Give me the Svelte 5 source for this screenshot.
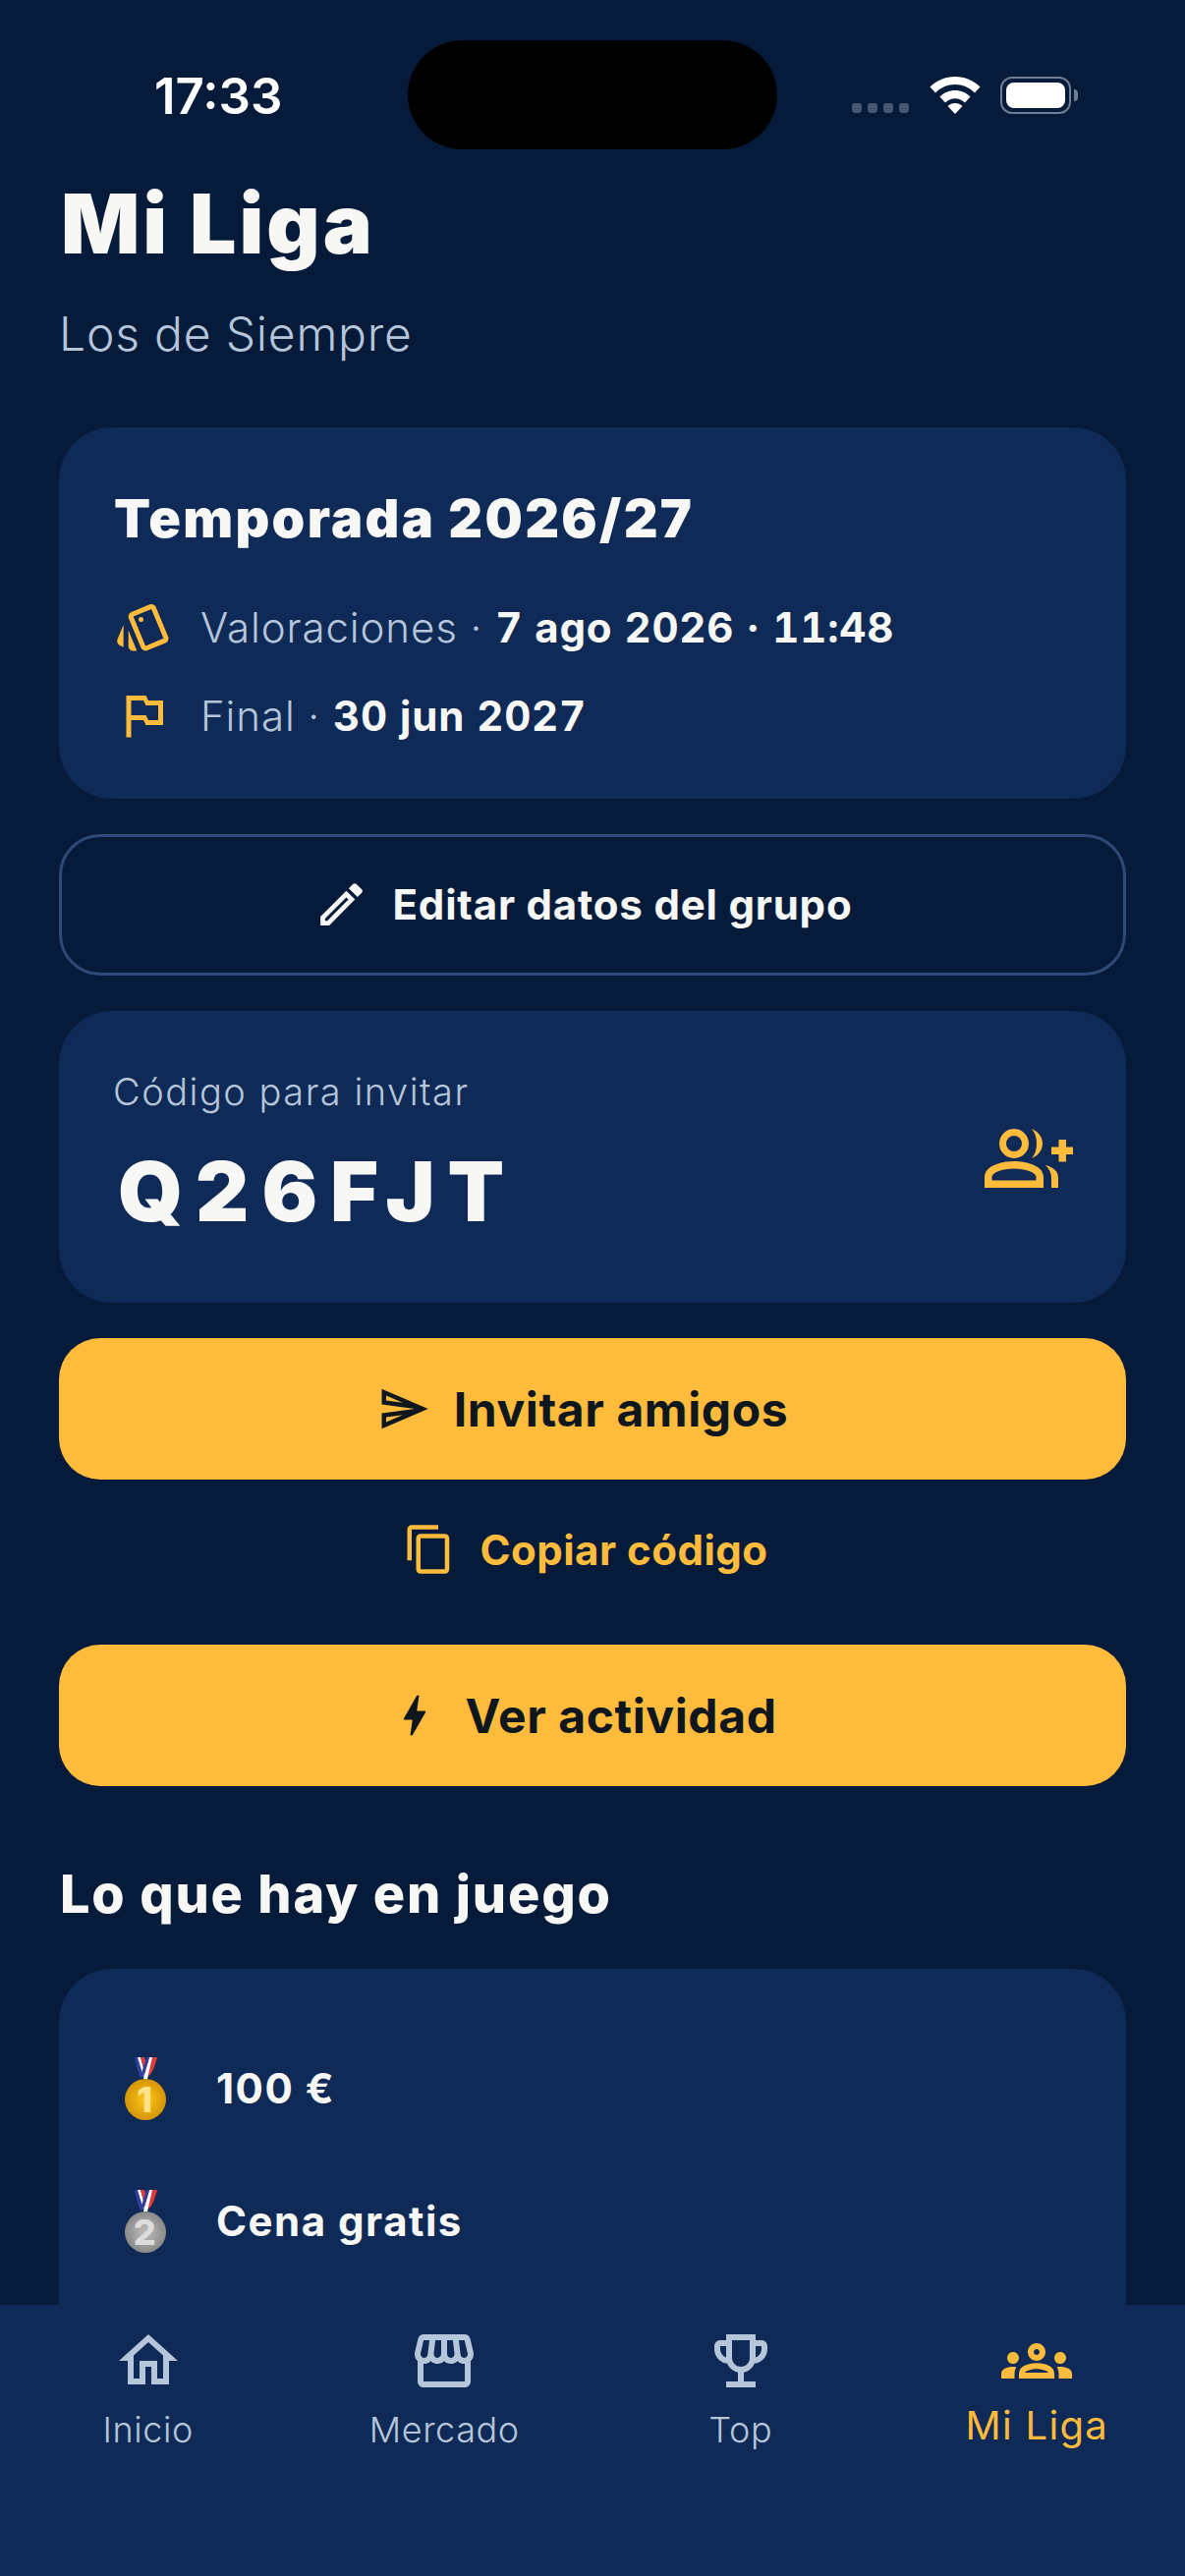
<script>
  const tabs = [
    { label: 'Inicio', d: 'M12 5.69l5 4.5V18h-2v-6H9v6H7v-7.81l5-4.5M12 3L2 12h3v8h6v-6h2v6h6v-8h3L12 3z' },
    { label: 'Mercado', d: 'M21.9 8.89l-1.05-4.37c-.22-.9-1-1.52-1.91-1.52H5.05c-.9 0-1.69.63-1.9 1.52L2.1 8.89c-.24 1.02-.02 2.06.62 2.88.08.11.19.19.28.29V19c0 1.1.9 2 2 2h14c1.1 0 2-.9 2-2v-6.94c.09-.09.2-.18.28-.28.64-.82.87-1.87.62-2.89zm-2.99-3.9l1.05 4.37c.1.42.01.84-.25 1.17-.14.18-.44.47-.94.47-.61 0-1.14-.49-1.21-1.14L16.98 5l1.93-.01zM13 5h1.96l.54 4.52c.05.39-.07.78-.33 1.07-.22.26-.54.41-.95.41-.67 0-1.22-.59-1.22-1.31V5zM8.49 9.52L9.04 5H11v4.69c0 .72-.55 1.31-1.29 1.31-.34 0-.65-.15-.89-.41-.25-.29-.37-.68-.33-1.07zm-4.45-.16L5.05 5h1.97l-.58 4.86c-.08.65-.6 1.14-1.21 1.14-.49 0-.8-.29-.93-.47-.27-.32-.36-.75-.26-1.17zM5 19v-6.03c.08.01.15.03.23.03.87 0 1.66-.36 2.24-.95.6.6 1.4.95 2.31.95.87 0 1.65-.36 2.23-.93.59.57 1.39.93 2.29.93.84 0 1.64-.35 2.24-.95.58.59 1.37.95 2.24.95.08 0 .15-.02.23-.03V19H5z' },
    { label: 'Top', d: 'M19 5h-2V3H7v2H5c-1.1 0-2 .9-2 2v1c0 2.55 1.92 4.63 4.39 4.94.63 1.5 1.98 2.63 3.61 2.96V19H7v2h10v-2h-4v-3.1c1.63-.33 2.98-1.46 3.61-2.96C19.08 12.63 21 10.55 21 8V7c0-1.1-.9-2-2-2zM5 8V7h2v3.82C5.84 10.4 5 9.3 5 8zm7 6c-1.65 0-3-1.35-3-3V5h6v6c0 1.65-1.35 3-3 3zm7-6c0 1.3-.84 2.4-2 2.82V7h2v1z' },
    { label: 'Mi Liga', active: true, d: 'M4 13c1.1 0 2-.9 2-2 0-1.1-.9-2-2-2s-2 .9-2 2c0 1.1.9 2 2 2zm1.13 1.1C4.76 14.04 4.39 14 4 14c-.99 0-1.93.21-2.78.58C.48 14.9 0 15.62 0 16.43V18h4.5v-1.61c0-.83.23-1.61.63-2.29zM20 13c1.1 0 2-.9 2-2 0-1.1-.9-2-2-2s-2 .9-2 2c0 1.1.9 2 2 2zm4 3.43c0-.81-.48-1.53-1.22-1.85C21.93 14.21 20.99 14 20 14c-.39 0-.76.04-1.13.1.4.68.63 1.46.63 2.29V18H24v-1.57zM16.24 13.65c-1.17-.52-2.61-.9-4.24-.9-1.63 0-3.07.39-4.24.9C6.68 14.13 6 15.21 6 16.39V18h12v-1.61c0-1.18-.68-2.26-1.76-2.74zM8.07 16c.09-.23.13-.39.91-.69.97-.38 1.99-.56 3.02-.56s2.05.18 3.02.56c.77.3.81.46.91.69H8.07zM12 8c.55 0 1 .45 1 1s-.45 1-1 1-1-.45-1-1 .45-1 1-1m0-2c-1.66 0-3 1.34-3 3s1.34 3 3 3 3-1.34 3-3-1.34-3-3-3z' }
  ];

  const prizes = [
    { n: '1', text: '100 €', from: '#fdc81a', to: '#d08f04', num: '#ffe38a' },
    { n: '2', text: 'Cena gratis', from: '#bdbdbd', to: '#858585', num: '#dcdcdc' }
  ];
</script>

<div class="page">
  <div class="island"></div>

  <div class="status">
    <span class="time">17:33</span>
    <div class="status-icons">
      <div class="dots"><i></i><i></i><i></i><i></i></div>
      <svg class="wifi" viewBox="0 0 52 38" width="52" height="38">
        <path fill="#fff" d="M26 0c10 0 18.500 3.800 25.500 10.500L46 16.500C40.500 11 34 8 26 8S11.500 11 6 16.500L.5 10.500C7.500 3.800 16 0 26 0z" />
        <path fill="#fff" d="M26 14c6 0 11.500 2.300 15.500 6.500L36 26.500c-2.800-2.700-6-4.300-10-4.300s-7.200 1.600-10 4.300L10.500 20.500C14.500 16.300 20 14 26 14z" />
        <path fill="#fff" d="M26 27c3 0 5.300 1 7.500 3L26 38l-7.500-8c2.200-2 4.500-3 7.500-3z" />
      </svg>
      <div class="battery"><div class="level"></div></div>
    </div>
  </div>

  <main class="content">
    <h1>Mi Liga</h1>
    <p class="subtitle">Los de Siempre</p>

    <section class="card season">
      <h2>Temporada 2026/27</h2>
      <div class="row">
        <svg viewBox="0 0 24 24" class="icon-60 amber">
          <path d="M2.530 19.650l1.340.56v-9.030l-2.430 5.860c-.41 1.020.08 2.190 1.090 2.610zm19.500-3.700L17.070 3.980c-.31-.75-1.040-1.210-1.810-1.230-.26 0-.53.04-.79.15L7.100 5.950c-.75.31-1.210 1.030-1.230 1.800-.01.27.04.54.15.8l4.960 11.970c.31.76 1.050 1.220 1.830 1.230.26 0 .52-.05.77-.15l7.360-3.050c1.020-.42 1.510-1.590 1.090-2.600zm-9.200 3.800L7.870 7.790l7.350-3.040h.01l4.950 11.950-7.350 3.050z" />
          <circle cx="11" cy="9" r="1" />
          <path d="M5.880 19.750c0 1.100.9 2 2 2h1.450l-3.450-8.340v6.340z" />
        </svg>
        <span class="muted">Valoraciones ·</span>
        <b>7 ago 2026 · 11:48</b>
      </div>
      <div class="row">
        <svg viewBox="0 0 24 24" class="icon-60 amber">
          <path d="M14 6l-1-2H5v17h2v-7h5l1 2h7V6h-6zm4 8h-4l-1-2H7V6h5l1 2h5v6z" />
        </svg>
        <span class="muted">Final ·</span>
        <b>30 jun 2027</b>
      </div>
    </section>

    <button class="btn outline">
      <svg viewBox="0 0 24 24" class="icon-57 white">
        <path d="M3 17.250V21h3.750L17.810 9.940l-3.750-3.750L3 17.250zM5.920 19H5v-.92l9.060-9.060.92.92L5.920 19zM20.710 5.630l-2.340-2.340c-.2-.2-.45-.29-.71-.29s-.51.1-.7.29l-1.830 1.830 3.750 3.750 1.830-1.830c.39-.39.39-1.020 0-1.410z" />
      </svg>
      Editar datos del grupo
    </button>

    <section class="card invite">
      <div class="invite-text">
        <div class="invite-label">Código para invitar</div>
        <div class="code">Q26FJT</div>
      </div>
      <svg class="group-add" viewBox="0 0 90 60" width="90" height="60">
        <circle cx="30" cy="15" r="11.500" fill="none" stroke="#ffbb3b" stroke-width="7" />
        <path fill="#ffbb3b" d="M48 0c7 3 11 8.500 11 15s-4 12-11 15c3.500-4 5-9 5-15s-1.500-11-5-15z" />
        <path fill="#ffbb3b" fill-rule="evenodd" d="M0 60V49c0-11 16-16 30-16s30 5 30 16v11H0zm7.500-7.500h45V49c0-4.500-11-8.500-22.500-8.500S7.500 44.500 7.500 49v3.500z" />
        <path fill="#ffbb3b" d="M62 37c8 2 13 6 13 13v10h-7V50c0-5-2-9-6-13z" />
        <path fill="#ffbb3b" d="M75.500 11h7.500v7.500h7.500v7.500H83v7.500h-7.500V26H68v-7.500h7.500z" />
      </svg>
    </section>

    <button class="btn primary">
      <svg viewBox="0 0 24 24" class="icon-54 dark">
        <path d="M4.010 6.030l7.510 3.220-7.520-1 .01-2.220m7.500 8.720L4 17.970v-2.220l7.510-1M2.010 3L2 10l15 2-15 2 .01 7L23 12 2.010 3z" />
      </svg>
      Invitar amigos
    </button>

    <button class="btn link">
      <svg viewBox="0 0 24 24" class="icon-54 amber">
        <path d="M16 1H4c-1.100 0-2 .9-2 2v14h2V3h12V1zm3 4H8c-1.100 0-2 .9-2 2v14c0 1.100.9 2 2 2h11c1.100 0 2-.9 2-2V7c0-1.100-.9-2-2-2zm0 16H8V7h11v14z" />
      </svg>
      Copiar código
    </button>

    <button class="btn primary">
      <svg viewBox="0 0 24 24" class="icon-54 dark">
        <path d="M11 21h-1l1-7H7.500c-.58 0-.57-.32-.38-.66.19-.34.05-.08.07-.12C8.480 10.940 10.420 7.540 13 3h1l-1 7h3.500c.49 0 .56.33.47.51l-.07.15C12.960 17.550 11 21 11 21z" />
      </svg>
      Ver actividad
    </button>

    <h3>Lo que hay en juego</h3>

    <section class="card prizes">
      {#each prizes as p}
        <div class="prize">
          <svg class="medal" viewBox="0 0 42 64" width="42" height="64">
            <defs>
              <radialGradient id={'m' + p.n} cx="50%" cy="50%" r="55%">
                <stop offset="0" stop-color={p.from} />
                <stop offset="1" stop-color={p.to} />
              </radialGradient>
            </defs>
            <!-- ribbon: left strand, then right strand on top -->
            <path fill="#2c3f9e" d="M10 0h3l6 20-3 1C13 15 11 7 10 0z" />
            <path fill="#fff" d="M13 0h3l5 18-2 2z" />
            <path fill="#e23b3b" d="M16 0h4l3 9-2 9z" />
            <path fill="#e23b3b" d="M33 0h-5l-5 16 2 3c4-5 6-12 8-19z" />
            <path fill="#fff" d="M28 0h-3l-6 22h4z" />
            <path fill="#2c3f9e" d="M25 0h-3l-5 16 2 4z" />
            <circle cx="21" cy="43" r="21" fill={'url(#m' + p.n + ')'} />
            <text x="21" y="56" text-anchor="middle" class="medal-num" fill={p.num}>{p.n}</text>
          </svg>
          <span>{p.text}</span>
        </div>
      {/each}
    </section>
  </main>

  <nav class="tabbar">
    {#each tabs as t}
      <div class="tab" class:active={t.active}>
        <svg viewBox="0 0 24 24" width="72" height="72"><path d={t.d} /></svg>
        <span>{t.label}</span>
      </div>
    {/each}
  </nav>
</div>

<style>
  :global(body) {
    margin: 0;
    background: #061b3a;
  }

  .page {
    position: relative;
    width: 1206px;
    height: 2622px;
    overflow: hidden;
    background: #061b3a;
    color: #f7f8f5;
    font-family: Inter, "Noto Sans", sans-serif;
  }

  .island {
    position: absolute;
    left: 415px;
    top: 41px;
    width: 376px;
    height: 111px;
    border-radius: 56px;
    background: #000;
  }

  .status {
    display: flex;
    justify-content: space-between;
    align-items: flex-start;
    height: 173px;
    padding: 69px 116px 0 157px;
    box-sizing: border-box;
  }

  .time {
    font-size: 51px;
    font-weight: 600;
    line-height: 58px;
    color: #fff;
  }

  .status-icons {
    display: flex;
    align-items: flex-end;
    gap: 20px;
    padding-top: 9px;
  }

  .dots {
    display: flex;
    gap: 6px;
    margin-right: 1px;
    padding-bottom: 1px;
  }

  .dots i {
    width: 10px;
    height: 10px;
    border-radius: 3px;
    background: #465670;
  }

  .battery {
    position: relative;
    width: 72px;
    height: 38px;
    box-sizing: border-box;
    padding: 4px;
    border: 2px solid #6f7d92;
    border-radius: 12px;
  }

  .battery::after {
    content: "";
    position: absolute;
    right: -9px;
    top: 11px;
    width: 4px;
    height: 12px;
    border-radius: 0 4px 4px 0;
    background: #6f7d92;
  }

  .level {
    height: 100%;
    border-radius: 8px;
    background: #fff;
  }

  .content {
    padding: 0 60px;
  }

  h1 {
    margin: 0 0 0 2px;
    font-size: 84px;
    font-weight: 900;
    line-height: 110px;
    letter-spacing: 3px;
  }

  .subtitle {
    margin: 25px 0 0;
    font-size: 48px;
    font-weight: 300;
    line-height: 64px;
    letter-spacing: 0.8px;
    color: #b5c5da;
  }

  .card {
    background: #0f2a56;
    border-radius: 54px;
    box-sizing: border-box;
  }

  .season {
    margin-top: 63px;
    height: 378px;
    padding: 57px 56px 0;
  }

  h2 {
    margin: 0 0 29px;
    font-size: 54px;
    font-weight: 900;
    line-height: 72px;
    letter-spacing: 2.3px;
  }

  .row {
    display: flex;
    align-items: center;
    height: 90px;
    font-size: 42px;
    letter-spacing: 0.9px;
  }

  .row svg {
    margin-right: 28px;
  }

  .muted {
    font-weight: 300;
    color: #b5c5da;
    margin-right: 13px;
  }

  .row b {
    font-weight: 700;
    font-variant-numeric: tabular-nums;
    letter-spacing: 0.8px;
  }

  .icon-60 {
    width: 60px;
    height: 60px;
    flex: none;
  }

  .icon-57 {
    width: 57px;
    height: 57px;
    flex: none;
  }

  .icon-54 {
    width: 54px;
    height: 54px;
    flex: none;
  }

  .amber {
    fill: #ffbb3b;
  }

  .white {
    fill: #f7f8f5;
  }

  .dark {
    fill: #0f171e;
  }

  .btn {
    display: flex;
    align-items: center;
    justify-content: center;
    gap: 24px;
    width: 100%;
    height: 144px;
    box-sizing: border-box;
    padding: 0 20px 0 0;
    border: none;
    border-radius: 42px;
    font-family: inherit;
    font-weight: 700;
  }

  .outline {
    margin-top: 36px;
    padding-bottom: 2px;
    background: transparent;
    border: 3px solid #2f4a78;
    color: #f7f8f5;
    font-size: 42px;
    letter-spacing: 0.8px;
  }

  .primary {
    background: #ffbb3b;
    color: #0f171e;
    font-size: 48px;
    letter-spacing: 0.6px;
  }

  .link {
    margin-bottom: 24px;
    padding-right: 14px;
    padding-bottom: 2px;
    background: transparent;
    color: #ffbb3b;
    font-size: 42px;
    letter-spacing: 0.5px;
  }

  .invite {
    display: flex;
    align-items: center;
    justify-content: space-between;
    height: 297px;
    margin: 36px 0;
    padding: 0 54px 0 55px;
  }

  .invite-text {
    padding-bottom: 7px;
  }

  .invite-label {
    font-size: 38px;
    font-weight: 300;
    letter-spacing: 1.500px;
    color: #b5c5da;
  }

  .code {
    margin: 31px 0 0 5px;
    font-size: 84px;
    font-weight: 900;
    letter-spacing: 13px;
    line-height: 96px;
  }

  .group-add {
    margin-top: 2px;
  }

  h3 {
    margin: 78px 0 44px 1px;
    font-size: 54px;
    font-weight: 800;
    line-height: 64px;
    letter-spacing: 1.8px;
  }

  .prizes {
    padding: 54px 60px 220px;
  }

  .prize {
    display: flex;
    align-items: center;
    gap: 51px;
    height: 135px;
    margin-left: 7px;
    font-size: 42px;
    font-weight: 700;
    letter-spacing: 1.500px;
  }

  .medal-num {
    font-size: 36px;
    font-weight: 800;
  }

  .tabbar {
    position: absolute;
    left: 0;
    right: 0;
    bottom: 0;
    height: 276px;
    display: grid;
    grid-template-columns: repeat(4, 1fr);
    background: #0f2a56;
  }

  .tab {
    display: flex;
    flex-direction: column;
    align-items: center;
    padding-top: 21px;
    font-size: 36px;
    font-weight: 300;
    letter-spacing: 0.6px;
    color: #b5c5da;
  }

  .tab svg {
    fill: currentColor;
  }

  .tab span {
    line-height: 44px;
    margin-top: 12px;
  }

  .tab.active {
    color: #ffbb3b;
    font-size: 40px;
    font-weight: 400;
    letter-spacing: 1.3px;
  }

  .tab.active span {
    margin-top: 8px;
  }
</style>
